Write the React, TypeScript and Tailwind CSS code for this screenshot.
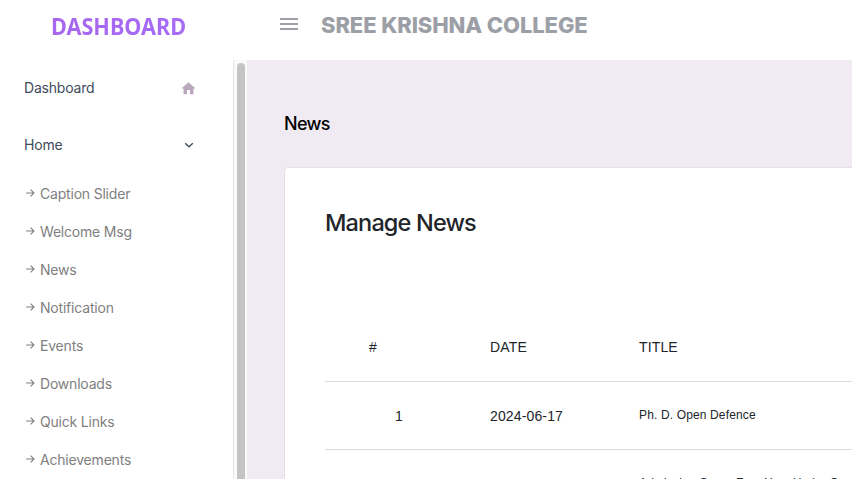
import { MdHome, MdMenu } from "react-icons/md";

const links = [
  "Caption Slider",
  "Welcome Msg",
  "News",
  "Notification",
  "Events",
  "Downloads",
  "Quick Links",
  "Achievements",
];

const rows = [
  { id: 1, date: "2024-06-17", title: "Ph. D. Open Defence" },
  { id: 2, date: "2024-06-11", title: "Admission Open: Four Year Under Graduate" },
];

const Arrow = () => (
  <svg className="mr-[5px] h-[10px] w-[10px]" viewBox="0 0 10 10" fill="none" stroke="currentColor" strokeWidth="1.1">
    <path d="M1 5H9M5.6 1.6L9 5L5.6 8.4" />
  </svg>
);

const Header = () => (
  <header className="flex h-[60px] shrink-0 bg-white">
    <div className="w-[233px] shrink-0 pl-[51px] pt-[9px]">
      <h1 className="w-fit origin-left scale-x-[0.903] bg-linear-to-r from-[#a866ee] to-[#a56cf8] bg-clip-text font-['Noto_Sans',sans-serif] text-[24px] leading-[34px] font-bold text-transparent">
        DASHBOARD
      </h1>
    </div>
    <div className="flex h-[49px] items-center pl-[44px] whitespace-nowrap">
      <MdMenu className="-mt-px h-6 w-6 text-[#9c9fa6]" />
      <h2 className="ml-5 pt-0.5 text-[22px] font-extrabold tracking-[-0.12px] text-[#9c9fa6]">
        SREE KRISHNA COLLEGE
      </h2>
    </div>
  </header>
);

const Sidebar = () => (
  <aside className="flex w-[233px] shrink-0 flex-col bg-white pl-6 text-[14px] tracking-[-0.2px] text-[#3e4b5b]">
    <div className="flex h-14 shrink-0 items-center justify-between pr-9">
      <span className="pb-0.5">Dashboard</span>
      <MdHome className="h-[17px] w-[17px] text-[#bba8bf]" />
    </div>
    <div className="flex h-[58px] shrink-0 items-center justify-between pr-[39px]">
      <span className="pb-0.5">Home</span>
      <svg className="h-[10px] w-[10px]" viewBox="0 0 10 10" fill="none" stroke="currentColor" strokeWidth="1.3">
        <path d="M1.2 3.2L5 6.8L8.8 3.2" />
      </svg>
    </div>
    <ul className="text-[#808080]">
      {links.map((link) => (
        <li key={link} className="flex h-[38px] items-center pl-px">
          <Arrow />
          {link}
        </li>
      ))}
    </ul>
  </aside>
);

const NewsTable = () => (
  <table className="w-[700px] table-fixed border-collapse text-left font-['Liberation_Sans',sans-serif] text-[14px] tracking-[0.14px] text-[#212529]">
    <thead>
      <tr className="h-[68px] border-b border-[#dcdcdc]">
        <th className="w-[165px] pt-0.5 pl-[44px] font-normal">#</th>
        <th className="w-[149px] pt-0.5 font-normal">DATE</th>
        <th className="pt-0.5 font-normal">TITLE</th>
      </tr>
    </thead>
    <tbody>
      {rows.map((row) => (
        <tr key={row.id} className="h-[68px] border-b border-[#dcdcdc]">
          <td className="pt-0.5 pl-[70px]">{row.id}</td>
          <td className="pt-0.5">{row.date}</td>
          <td className="text-[12px]">{row.title}</td>
        </tr>
      ))}
    </tbody>
  </table>
);

export default function App() {
  return (
    <div className="flex h-[479px] w-[852px] flex-col overflow-hidden bg-white font-['Inter',sans-serif]">
      <Header />
      <div className="flex min-h-0 flex-1">
        <Sidebar />
        <div className="w-[14px] shrink-0 border-l border-[#e4e4e4] bg-[#fafafa] pl-[3px] pt-[3px]">
          <div className="h-[460px] w-2 rounded-full bg-[#c4c4c4]" />
        </div>
        <main className="min-w-0 flex-1 bg-[#f0ebf2] pl-[37px] pt-[50px]">
          <h3 className="h-[57px] text-[18px] leading-[28px] font-medium tracking-[-0.7px] text-black">News</h3>
          <section className="w-[780px] rounded border border-[#e3dfe5] bg-white pl-10 pt-10">
            <h4 className="mb-[75px] text-[23.5px] leading-[30px] font-medium tracking-[-0.85px] text-[#212529]">
              Manage News
            </h4>
            <NewsTable />
          </section>
        </main>
      </div>
    </div>
  );
}
